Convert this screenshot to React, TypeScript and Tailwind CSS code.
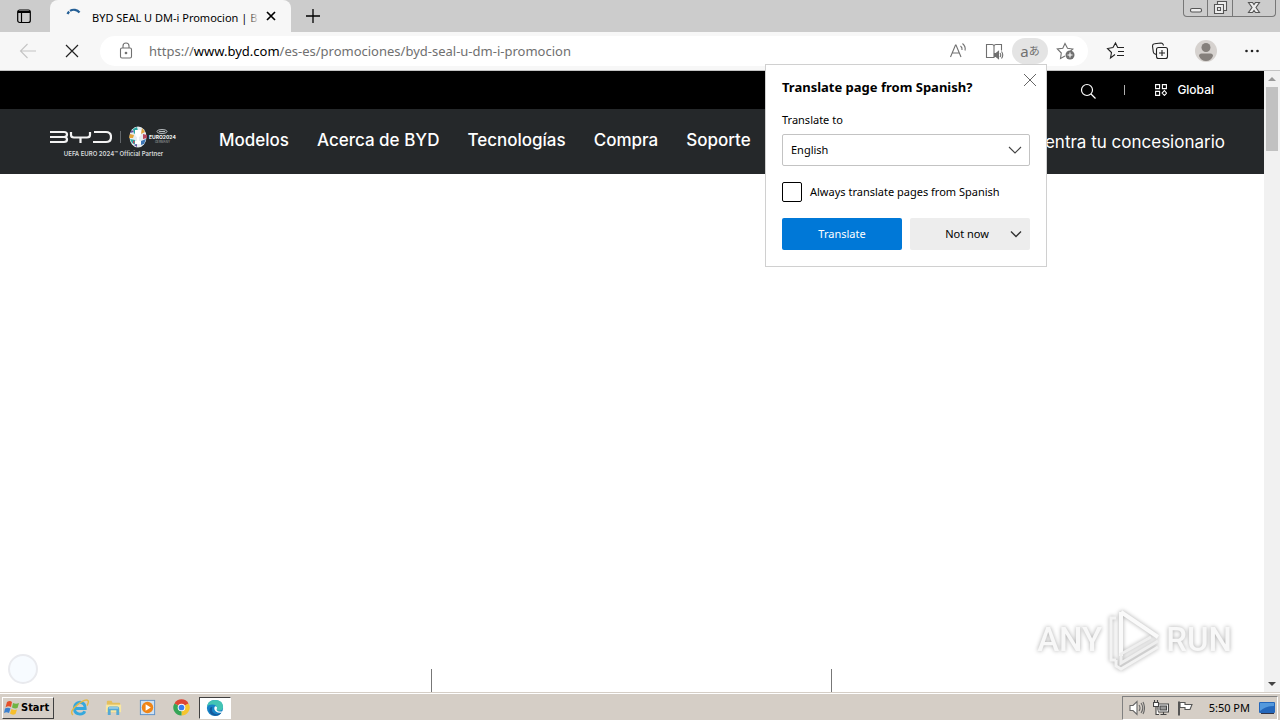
import type { ReactNode } from "react";

const ui = "font-['Noto_Sans','Open_Sans',sans-serif]";

function Icon({
  children,
  className = "h-5 w-5",
  box = "0 0 20 20",
}: {
  children: ReactNode;
  className?: string;
  box?: string;
}) {
  return (
    <svg
      viewBox={box}
      className={`shrink-0 ${className}`}
      fill="none"
      stroke="currentColor"
      strokeWidth="1.1"
      aria-hidden="true"
    >
      {children}
    </svg>
  );
}

function TabStrip() {
  return (
    <header className="flex h-8 shrink-0 items-start bg-[#cccccc]">
      <button
        aria-label="Tab actions"
        className="flex h-8 w-[50px] items-center justify-center pr-0.5"
      >
        <Icon className="h-4 w-4" box="0 0 16 16">
          <rect x="1.7" y="2" width="12.6" height="12.5" rx="2" strokeWidth="1.2" />
          <path d="M2 4h12" strokeWidth="2" />
          <path d="M5.5 5v9" strokeWidth="1.2" />
        </Icon>
      </button>
      <div className="flex h-8 w-[241px] items-center rounded-t-lg bg-[#f7f7f7] pr-3 pl-4">
        <Icon className="h-4 w-4 text-[#245f96]" box="0 0 16 16">
          <path d="M1.500 6A7 7 0 0 1 13.500 4.500" strokeWidth="2.2" strokeDasharray="3 1 12" />
        </Icon>
        <div className="relative ml-2.5 flex-1 overflow-hidden whitespace-nowrap">
          <span className="text-[11px] leading-4 text-black">BYD SEAL U DM-i Promocion | B</span>
          <span className="absolute inset-y-0 right-0 w-3 bg-linear-to-r from-transparent to-[#f7f7f7]" />
        </div>
        <button aria-label="Close tab" className="ml-1 text-black">
          <Icon className="h-4 w-4" box="0 0 16 16">
            <path d="M4 4l8 8M12 4l-8 8" strokeWidth="1.7" />
          </Icon>
        </button>
      </div>
      <button aria-label="New tab" className="flex h-8 w-11 items-center justify-center text-black">
        <Icon className="h-4 w-4" box="0 0 16 16">
          <path d="M8 1v14M1 8h14" strokeWidth="1.3" />
        </Icon>
      </button>
      <div className="mr-1 ml-auto flex h-[17px] divide-x divide-[#777] rounded-b border border-t-0 border-[#777] text-[#555]">
        <button aria-label="Minimize" className="flex w-6 items-center justify-center">
          <Icon className="h-4 w-4" box="0 0 16 16">
            <rect x="2.5" y="8.5" width="11" height="3.5" rx="1.5" fill="#eee" />
          </Icon>
        </button>
        <button aria-label="Restore" className="flex w-[25px] items-center justify-center">
          <Icon className="h-4 w-4" box="0 0 16 16">
            <path d="M5.5 1.5h9v9h-3v3h-9v-9h3z" fill="#eee" />
            <path d="M5.5 4.5h6v6M5.5 7.5h3v3h-3z" />
          </Icon>
        </button>
        <button aria-label="Close" className="flex w-[42px] items-center justify-center">
          <Icon className="h-4 w-4" box="0 0 16 16">
            <path
              d="M2.5 2.5h4L8 4.5l1.5-2h4L10 7.5l3.5 5h-4L8 10.5l-1.5 2h-4L6 7.5z"
              fill="#eee"
            />
          </Icon>
        </button>
      </div>
    </header>
  );
}

function Toolbar() {
  return (
    <div className="flex h-[39px] shrink-0 items-center border-b border-[#c4c4c4] bg-[#f7f7f7] pr-[18px] text-[#222]">
      <button aria-label="Back" className="flex w-14 justify-center text-[#c4c4c4]">
        <Icon>
          <path d="M18 10H2.5M9.5 3L2.5 10l7 7" />
        </Icon>
      </button>
      <button aria-label="Stop loading" className="mr-5 ml-2 text-[#222]">
        <Icon className="h-4 w-4" box="0 0 16 16">
          <path d="M2 2l12 12M14 2L2 14" strokeWidth="1.2" />
        </Icon>
      </button>
      <div className="flex h-[30px] flex-1 items-center rounded-full bg-white pr-3 pl-4 text-[#707070]">
        <Icon>
          <rect x="4.5" y="7" width="11" height="10" rx="1.5" />
          <path d="M7 7V5a3 3 0 0 1 6 0v2" />
          <circle cx="10" cy="12" r=".8" fill="currentColor" />
        </Icon>
        <div className="ml-[13px] flex-1 text-[13px] leading-5 whitespace-nowrap">
          <a href="#address">
            https://<span className="text-black">www.byd.com</span>
            /es-es/promociones/byd-seal-u-dm-i-promocion
          </a>
        </div>
        <button aria-label="Read aloud" className="mr-4">
          <Icon>
            <path d="M2.5 16L7.5 4h.5l5 12M4.3 12h7M12.5 5q2 1.5 1.5 4M14.5 2.5q3.5 3 2.5 7" />
          </Icon>
        </button>
        <button aria-label="Immersive reader">
          <Icon>
            <path d="M8 16.500H2.500v-13H8q2 0 2 2v11H8M10 5.500q0-2 2-2h5.500v6" />
            <path d="M10.500 12.500h1.500l2.500-2v7l-2.500-2h-1.500z" fill="currentColor" />
            <path d="M16 12q1.500 2 0 4M17.500 10.500q2.500 3.500 0 7" />
          </Icon>
        </button>
        <button
          aria-label="Translate page"
          className="mr-2 ml-2 flex h-[26px] w-9 items-center justify-center rounded-full bg-[#e4e4e4] font-['Noto_Sans','Noto_Sans_CJK_JP',sans-serif] text-[15px] leading-5"
        >
          a<span className="text-[11px]">あ</span>
        </button>
        <button aria-label="Add to favorites">
          <Icon>
            <path d="M9 15l-4.500 2.500.8-5.500-4-4 5.500-.8L9 2.500l2.500 4.700 5.300.8-2.500 2.300" />
            <circle cx="14" cy="14" r="4.500" fill="currentColor" stroke="none" />
            <path d="M14 11.500v5M11.500 14h5" stroke="#fff" />
          </Icon>
        </button>
      </div>
      <div className="ml-[18px] flex items-center gap-6">
        <button aria-label="Favorites">
          <Icon>
            <path d="M9 13.500L4.500 17l1-5.500-4-4L7 6.500 9.500 2l2.200 4.500H18M12 10.500h6M11 14.500h7" />
          </Icon>
        </button>
        <button aria-label="Collections">
          <Icon>
            <path d="M6.500 13.500L5 13Q3.500 12.500 3.300 11L2.500 5q0-2 2-2.200L11 2q2 0 2.500 2.500" />
            <rect x="6.500" y="6.500" width="11" height="11" rx="2" />
            <path d="M12 9v6M9 12h6" />
          </Icon>
        </button>
        <button aria-label="Profile">
          <Icon className="h-6 w-6" box="0 0 24 24">
            <circle cx="12" cy="12" r="11" fill="#d6d2cf" stroke="none" />
            <circle cx="12" cy="8.500" r="4.500" fill="#85807c" stroke="none" />
            <path
              d="M5 17q0-2.500 2.500-2.500h9Q19 14.500 19 17q-2 5-7 5t-7-5z"
              fill="#85807c"
              stroke="none"
            />
          </Icon>
        </button>
        <button aria-label="Settings and more">
          <Icon>
            <g fill="currentColor" stroke="none">
              <circle cx="4.500" cy="10" r="1.300" />
              <circle cx="10" cy="10" r="1.300" />
              <circle cx="15.500" cy="10" r="1.300" />
            </g>
          </Icon>
        </button>
      </div>
    </div>
  );
}

function Logo() {
  return (
    <a href="#home" aria-label="BYD" className="flex w-[127px] shrink-0 flex-col text-white">
      <span className="flex h-[22px] items-center">
        <svg
          viewBox="0 0 62 14"
          className="h-3.5 w-[62px] shrink-0"
          fill="none"
          stroke="#f2f2f2"
          strokeWidth="2.2"
          aria-hidden="true"
        >
          <path d="M0 2h14q3 0 3 2.500T14 7H0M14 7q3 0 3 2.500T14 12H0" />
          <path d="M21 2v3q0 2.500 3 2.500h13q3 0 3-2.500V2M30.500 7.500V13" />
          <path d="M44 2h12q5 0 5 5t-5 5H43" />
        </svg>
        <span className="mx-2 h-3 w-px shrink-0 bg-[#62666a]" />
        <svg viewBox="0 0 18 22" className="h-[22px] w-[18px] shrink-0" aria-hidden="true">
          <ellipse cx="9" cy="11" rx="8.500" ry="10.500" fill="#e6edf0" />
          <path d="M4 3l4-2 1 4-4 3zM1 13l5 1 1 5-4-2z" fill="#28a8a4" />
          <path d="M13 2l3 4-4 2zM1 8l4 1-1 3H0z" fill="#e3a53b" />
          <path d="M12 15l5-2-2 5-3 1z" fill="#3d76b5" />
          <path d="M14 8l4 1v3l-4 1zM4 14l2 2-2 2z" fill="#b84860" />
          <path d="M5 19l3-1v3zM1 7l2-3 2 2z" fill="#6251a0" />
          <path d="M6 4h6v3q0 3-2 4v4h2v3H6v-3h2v-4Q6 10 6 7z" fill="#fff" />
        </svg>
        <span className="ml-0.5 flex flex-col items-center font-['Inter',sans-serif]">
          <svg
            viewBox="0 0 12 5"
            className="h-[5px] w-3"
            fill="none"
            stroke="#b9bdc0"
            aria-hidden="true"
          >
            <ellipse cx="6" cy="2.500" rx="5" ry="2" />
            <path d="M3 2.500h6" />
          </svg>
          <span className="text-[5px] leading-[6px] font-bold">EURO2024</span>
          <span className="text-[3px] leading-1 text-[#a3a8ab]">GERMANY</span>
        </span>
      </span>
      <span className="mt-0.5 text-center font-['Inter',sans-serif] text-[6px] leading-2 font-semibold whitespace-nowrap text-[#d5d8da]">
        UEFA EURO 2024™ Official Partner
      </span>
    </a>
  );
}

const links = ["Modelos", "Acerca de BYD", "Tecnologías", "Compra", "Soporte"];

function SiteHeader() {
  return (
    <div className="font-['Inter',sans-serif] text-white">
      <div className="flex h-[38px] items-center justify-end bg-black pr-[50px]">
        <button aria-label="Search" className="pt-0.5">
          <Icon className="h-4 w-4" box="0 0 16 16">
            <circle cx="7" cy="7" r="5.500" strokeWidth="1.200" />
            <path d="M11 11l4.500 4.500" strokeWidth="1.200" />
          </Icon>
        </button>
        <span className="mr-[30px] ml-7 h-2.5 w-px bg-[#b0b0b0]" />
        <a href="#global" className="flex items-center gap-2.5 text-[12px] leading-4 font-medium">
          <Icon className="h-3 w-3" box="0 0 12 12">
            <path d="M.6.600h4v4h-4zM7.400.600h4v4h-4zM.6 7.400h4v4h-4zM9.400 6.500l2.200 2.600-2.200 2.300-2.300-2.300z" />
          </Icon>
          Global
        </a>
      </div>
      <div className="flex h-[65px] items-center bg-[#25282a] pr-[39px] pl-[50px]">
        <Logo />
        <nav className="ml-[42px] flex gap-7 pb-1 text-[17px] leading-6 font-medium whitespace-nowrap">
          {links.map((link) => (
            <a key={link} href="#menu">
              {link}
            </a>
          ))}
        </nav>
        <a href="#dealers" className="ml-auto text-[17px] leading-6 whitespace-nowrap">
          Encuentra tu concesionario
        </a>
      </div>
    </div>
  );
}

function TranslatePopup() {
  return (
    <section
      aria-label="Translate page"
      className={`absolute top-16 right-[233px] w-[282px] border border-[#d0d0d0] bg-white px-4 pt-3 pb-4 text-[11px] leading-4 text-black ${ui}`}
    >
      <button aria-label="Close" className="absolute top-[7px] right-2 text-[#666]">
        <Icon className="h-4 w-4" box="0 0 16 16">
          <path d="M2 2l12 12M14 2L2 14" strokeWidth="1" />
        </Icon>
      </button>
      <h2 className="text-[13px] leading-5 font-bold">Translate page from Spanish?</h2>
      <label htmlFor="language" className="mt-[15px] block">
        Translate to
      </label>
      <div className="relative mt-1.5">
        <select
          id="language"
          className="h-8 w-full appearance-none rounded-xs border border-[#c3c3c3] bg-white px-2"
        >
          <option>English</option>
        </select>
        <Icon
          className="pointer-events-none absolute top-2 right-[7px] h-4 w-4 text-[#444]"
          box="0 0 16 16"
        >
          <path d="M2 5l6 6 6-6" />
        </Icon>
      </div>
      <label className="mt-4 flex items-center gap-2">
        <input
          type="checkbox"
          className="h-5 w-5 appearance-none rounded-xs border border-black bg-white"
        />
        Always translate pages from Spanish
      </label>
      <div className="mt-4 grid grid-cols-2 gap-2">
        <button className="h-8 rounded-xs bg-[#0078d7] text-white">Translate</button>
        <button className="flex h-8 items-center rounded-xs bg-[#ededed] pr-1.5">
          <span className="flex-1 pl-4 text-center">Not now</span>
          <Icon className="h-4 w-4 text-[#333]" box="0 0 16 16">
            <path d="M3 5.500l5 5 5-5" strokeWidth="1.400" />
          </Icon>
        </button>
      </div>
    </section>
  );
}

function Watermark() {
  return (
    <div className="absolute right-8 bottom-5 flex items-center gap-1 font-['Roboto',sans-serif] text-[33px] leading-[64px] font-medium text-[#f8f8f8] drop-shadow-[0_0_2px_#aaaaaa]">
      <span>ANY</span>
      <svg viewBox="0 0 56 64" className="h-16 w-14" fill="none" stroke="#fafafa" aria-hidden="true">
        <path d="M15 4v44M15 4l37 25" strokeWidth="4" />
        <path d="M52 33L15 55v-9l30-17" strokeWidth="3" stroke="#efefef" />
        <path d="M10 10H5v42h5M52 39L15 61l-5-3v-6" strokeWidth="3" stroke="#f3f3f3" />
      </svg>
      <span>RUN</span>
    </div>
  );
}

function Page() {
  return (
    <div className="flex min-h-0 flex-1">
      <main className="relative flex min-w-0 flex-1 flex-col bg-white">
        <SiteHeader />
        <div className="mt-auto flex h-[23px] pl-[431px]">
          <div className="w-[401px] border-x border-[#777]" />
        </div>
        <div className="absolute bottom-2 left-2 h-[30px] w-[30px] rounded-full border-2 border-[#e9eaee] bg-[#f7fbff]" />
        <Watermark />
      </main>
      <div className="flex w-4 flex-col items-center bg-[#f1f1f1]">
        <span className="flex h-4 items-center">
          <svg viewBox="0 0 8 4" className="h-1 w-2" aria-hidden="true">
            <path d="M0 4l4-4 4 4z" fill="#999" />
          </svg>
        </span>
        <div className="h-16 w-3 bg-[#c1c1c1]" />
        <span className="mt-auto flex h-[17px] items-center">
          <svg viewBox="0 0 8 4" className="h-1 w-2" aria-hidden="true">
            <path d="M0 0l4 4 4-4z" fill="#444" />
          </svg>
        </span>
      </div>
    </div>
  );
}

function Taskbar() {
  return (
    <footer className="flex h-7 shrink-0 items-center border-t border-[#d5cec6] bg-[#d5cec6] px-0.5 shadow-[inset_0_1px_0_#fff]">
      <button className="mt-0.5 flex h-[22px] w-[52px] items-center border border-t-white border-r-[#404040] border-b-[#404040] border-l-white pl-px font-['DejaVu_Sans_Condensed','DejaVu_Sans',sans-serif] text-[11px] leading-4 font-bold text-black">
        <svg viewBox="0 0 16 16" className="mr-px h-4 w-4 shrink-0" aria-hidden="true">
          <path d="M3 2q3-2 5 0L7 7Q4 5.500 1.500 7.500z" fill="#e5502a" />
          <path d="M9 3q3 1.500 6 0l-1.500 5Q11 9 8 7.500z" fill="#6fb443" />
          <path d="M1 8.500Q4 7 6.500 8.500L5 13q-2.500-1.500-5 0z" fill="#3b80cf" />
          <path d="M7.500 9q3 1.500 5.500.5L11.500 14q-3 1.500-5.500-.5z" fill="#f6bf2c" />
        </svg>
        Start
      </button>
      <div className="mt-0.5 ml-4 flex items-center gap-[15px]">
        <button aria-label="Internet Explorer">
          <svg viewBox="0 0 20 20" className="h-[19px] w-[19px]" fill="none" aria-hidden="true">
            <path
              d="M5 11h11q0-6-5.500-6.500Q5 5 4.500 11q.5 6 6 6 4 0 5-3"
              stroke="#35a8dd"
              strokeWidth="3"
            />
            <path d="M3 18Q-1 14 8 7t11-4q1 1-1 5" stroke="#e4b945" strokeWidth="1.500" />
          </svg>
        </button>
        <button aria-label="File Explorer">
          <svg viewBox="0 0 20 20" className="h-[19px] w-[19px]" aria-hidden="true">
            <path d="M3 4q0-1 1-1h4l1 2h7q1 0 1 1v9H3z" fill="#e4bf5c" />
            <path d="M2 7h16v8H2z" fill="#f8e7a2" />
            <path d="M4 11q0-2 2-2h8q2 0 2 2v7h-3v-5H7v5H4z" fill="#55a9d4" />
            <path d="M5 10.500h10" stroke="#c7eaf8" />
          </svg>
        </button>
        <button aria-label="Media Player">
          <svg viewBox="0 0 20 20" className="h-[19px] w-[19px]" aria-hidden="true">
            <rect x="2.500" y="2.500" width="15" height="15" fill="#cfe1f2" stroke="#5c91c9" />
            <circle cx="10" cy="10" r="6" fill="#ef8518" />
            <path d="M8 6.500l5.500 3.500L8 13.500z" fill="#fff" />
          </svg>
        </button>
        <button aria-label="Chrome">
          <svg viewBox="0 0 20 20" className="h-[19px] w-[19px]" aria-hidden="true">
            <path d="M10 10L2.600 5.700A8.500 8.500 0 0 1 17.400 5.700z" fill="#df4534" />
            <path d="M10 10l7.400-4.300A8.500 8.500 0 0 1 10 18.500z" fill="#f6c52e" />
            <path d="M10 10v8.500A8.500 8.500 0 0 1 2.600 5.700z" fill="#35a557" />
            <circle cx="10" cy="10" r="4" fill="#fff" />
            <circle cx="10" cy="10" r="3" fill="#3b7ded" />
          </svg>
        </button>
      </div>
      <button
        aria-label="Edge"
        className="mt-0.5 ml-2 flex h-[22px] w-8 items-center justify-center border border-t-[#404040] border-r-white border-b-white border-l-[#404040] bg-white"
      >
        <svg viewBox="0 0 20 20" className="h-[18px] w-[18px]" aria-hidden="true">
          <circle cx="10" cy="10" r="9" fill="#1683c7" />
          <path d="M1 9Q2 1 10 1q9 0 9 8 0 4-5 4-3 0-2-3 0-4-5-4-5 0-6 3z" fill="#43c4b4" />
          <path d="M7 9q-2 7 5 8 3 0 5-2-3 5-9 3-5-2-4-7 1-3 3-2z" fill="#155a9c" />
          <path d="M10 8q3 0 2 3-1 2 3 3 3 0 4-1l-1 2q-4 1-7-1-3-3-1-6z" fill="#fff" />
        </svg>
      </button>
      <div className="mt-0.5 ml-auto flex h-6 items-center gap-2 border border-t-[#808080] border-r-white border-b-white border-l-[#808080] pr-px pl-1.5 text-[11px] leading-4 text-black">
        <Icon className="h-4 w-4 text-[#666]" box="0 0 16 16">
          <path d="M1 5.500h3l4-4v13l-4-4H1z" fill="#fff" />
          <path d="M10 5q2 3 0 6M12 3q3.500 5 0 10M14 2q3 6 0 12" />
        </Icon>
        <Icon className="h-4 w-4 text-[#444]" box="0 0 16 16">
          <path d="M5 4h10.500v8H5zM7.500 14.500h6M10.500 12v2" fill="#fff" />
          <path d="M7 6h6.500v4H7z" fill="#999" />
          <path d="M.5 2.500h5v4h-5zM1.500 0v2.500M4.500 0v2.500M3 6.500v8h3" fill="#fff" />
        </Icon>
        <Icon className="h-4 w-4 text-[#555]" box="0 0 16 16">
          <path d="M2 1.500v14" strokeWidth="2" />
          <path d="M3 2.500h5v2h7l-2 5H8v-2H3z" fill="#fff" />
        </Icon>
        <time className="ml-2 whitespace-nowrap">5:50 PM</time>
        <svg viewBox="0 0 18 18" className="h-[18px] w-[18px]" aria-hidden="true">
          <rect x="1" y="3" width="16" height="11" rx="1" fill="#2467bb" />
          <path d="M2 4h14v3Q8 7 2 12z" fill="#5499dd" />
          <path d="M3 14.500h13" stroke="#334" />
        </svg>
      </div>
    </footer>
  );
}

export default function App() {
  return (
    <div className={`relative flex h-screen flex-col overflow-hidden bg-white ${ui}`}>
      <TabStrip />
      <Toolbar />
      <Page />
      <Taskbar />
      <TranslatePopup />
    </div>
  );
}
